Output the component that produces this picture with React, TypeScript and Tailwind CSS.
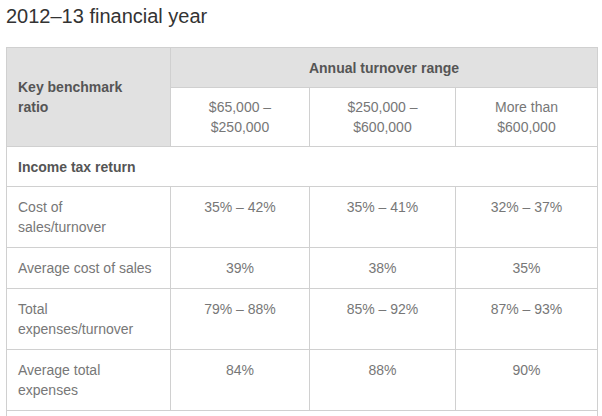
import React from "react";

const rows: { label: string[]; values: string[] }[] = [
  { label: ["Cost of", "sales/turnover"], values: ["35% – 42%", "35% – 41%", "32% – 37%"] },
  { label: ["Average cost of sales"], values: ["39%", "38%", "35%"] },
  { label: ["Total", "expenses/turnover"], values: ["79% – 88%", "85% – 92%", "87% – 93%"] },
  { label: ["Average total", "expenses"], values: ["84%", "88%", "90%"] },
];

const App: React.FC = () => {
  return (
    <div className="w-[602px] h-[416px] overflow-hidden bg-white font-['Liberation_Sans',Arial,sans-serif]">
      <h1 className="pl-[6px] pt-[4px] text-[20px] leading-[24px] text-[#333]">2012–13 financial year</h1>

      <table className="ml-[6px] mt-[19px] w-[591px] table-fixed border-collapse text-[14px] leading-[20px]">
        <colgroup>
          <col className="w-[164px]" />
          <col className="w-[139px]" />
          <col className="w-[146px]" />
          <col className="w-[142px]" />
        </colgroup>
        <thead>
          <tr>
            <th
              rowSpan={2}
              className="border border-[#d0d0d0] bg-[#e1e1e1] px-[11px] text-left align-middle font-bold text-[#555]"
            >
              Key benchmark
              <br />
              ratio
            </th>
            <th
              colSpan={3}
              className="h-[40px] border border-[#d0d0d0] bg-[#e1e1e1] text-center font-bold text-[#555]"
            >
              Annual turnover range
            </th>
          </tr>
          <tr>
            <td className="h-[59px] border border-[#d0d0d0] text-center text-[#777]">
              $65,000 –<br />$250,000
            </td>
            <td className="border border-[#d0d0d0] text-center text-[#777]">
              $250,000 –<br />$600,000
            </td>
            <td className="border border-[#d0d0d0] text-center text-[#777]">
              More than<br />$600,000
            </td>
          </tr>
        </thead>
        <tbody>
          <tr>
            <td colSpan={4} className="h-[40px] border border-[#d0d0d0] px-[11px] font-bold text-[#555]">
              Income tax return
            </td>
          </tr>
          {rows.map((r) => (
            <tr key={r.label.join(" ")}>
              <td className="h-[40px] border border-[#d0d0d0] px-[11px] py-[10px] align-top text-[#777]">
                {r.label.map((l, i) => (
                  <div key={i}>{l}</div>
                ))}
              </td>
              {r.values.map((v, i) => (
                <td key={i} className="border border-[#d0d0d0] py-[10px] text-center align-top text-[#777]">
                  {v}
                </td>
              ))}
            </tr>
          ))}
          <tr>
            <td colSpan={4} className="h-[40px] border border-[#d0d0d0]" />
          </tr>
        </tbody>
      </table>
    </div>
  );
};

export default App;
